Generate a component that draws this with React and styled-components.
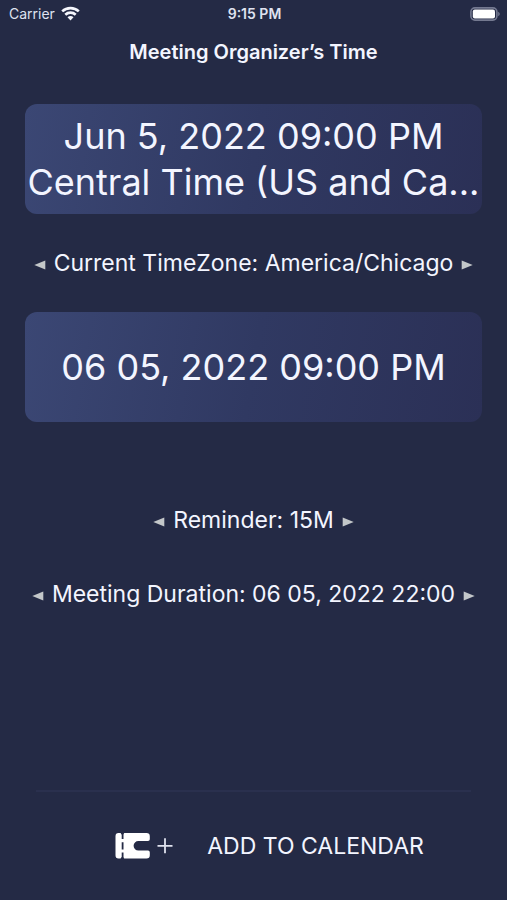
import { useState } from 'react';
import styled, { createGlobalStyle } from 'styled-components';

const GlobalStyle = createGlobalStyle`
    * {
        box-sizing: border-box;
    }

    body {
        margin: 0;
        background-color: #242a45;
        color: #f3f5ff;
        font-family: Inter, "Liberation Sans", sans-serif;
    }

    button {
        border: 0;
        padding: 0;
        background: none;
        color: inherit;
        font-family: inherit;
        cursor: pointer;
    }
`;

const Screen = styled.div`
    display: flex;
    flex-direction: column;
    min-height: 100vh;
`;

const StatusBar = styled.div`
    display: grid;
    grid-template-columns: 1fr auto 1fr;
    align-items: center;
    height: 27px;
    padding: 0 7px 0 9px;
    font-size: 14px;
    color: #dfe2f0;
`;

const Carrier = styled.div`
    display: flex;
    align-items: center;
    gap: 6px;
`;

const Clock = styled.time`
    font-weight: 600;
`;

const Battery = styled.div`
    display: flex;
    justify-content: flex-end;
`;

const Header = styled.header`
    display: flex;
    align-items: center;
    justify-content: center;
    height: 50px;
`;

const Title = styled.h1`
    margin: 0;
    font-size: 20px;
    font-weight: 600;
`;

const Main = styled.main`
    flex: 1;
    display: flex;
    flex-direction: column;
    padding: 27px 25px 0;
`;

const TimeCard = styled.button`
    display: flex;
    flex-direction: column;
    align-items: center;
    justify-content: center;
    width: 100%;
    height: 110px;
    border-radius: 12px;
    background-image: linear-gradient(100deg, #3b4774, #303962 50%, #2b3056);
    font-size: 36px;
    line-height: 46px;
    white-space: nowrap;
`;

const Options = styled.div`
    display: flex;
    flex-direction: column;
    gap: 42px;
    padding: 82px 0 0;
`;

const SelectorRow = styled.div`
    display: flex;
    align-items: center;
    justify-content: center;
    gap: 8px;
    height: ${props => props.$tall ? '98px' : '32px'};
    font-size: 23px;
    line-height: 32px;
    white-space: nowrap;
`;

const ArrowButton = styled.button`
    display: flex;
    padding: 4px 0 0;
`;

const Footer = styled.footer`
    margin: 0 36px;
    border-top: 2px solid #2a304e;
`;

const AddButton = styled.button`
    display: flex;
    align-items: center;
    justify-content: center;
    width: 100%;
    height: 108px;
    gap: 34px;
    padding: 0 0 0 32px;
    font-size: 23px;
`;

const ZONES = ['America/Chicago', 'America/New_York', 'America/Denver'];
const REMINDERS = ['15M', '30M', '1H'];
const DURATIONS = ['06 05, 2022 22:00', '06 05, 2022 22:30', '06 05, 2022 23:00'];

function WifiIcon () {
    return (
        <svg width="19" height="15" viewBox="0 0 19 15" fill="none" stroke="#f6f7fd" strokeWidth="2.6">
            <path d="M1.2 5.4C5.8 1 13.2 1 17.8 5.4" />
            <path d="M4.3 8.7C7.2 5.9 11.8 5.9 14.7 8.7" />
            <path d="M9.5 14.4L6.5 11.3C8.2 9.7 10.8 9.7 12.5 11.3Z" fill="#f6f7fd" stroke="none" />
        </svg>
    )
}

function BatteryIcon () {
    return (
        <svg width="30" height="14" viewBox="0 0 30 14">
            <rect x="0.9" y="0.9" width="26" height="12.2" rx="4" fill="none" stroke="#747990" strokeWidth="1.6" />
            <rect x="2.8" y="2.6" width="22.2" height="8.8" rx="2" fill="#fff" />
            <path d="M28.2 4.8C30.2 5.6 30.2 8.4 28.2 9.2Z" fill="#747990" />
        </svg>
    )
}

function ArrowIcon ({ direction }) {
    return (
        <svg width="12" height="10" viewBox="0 0 12 10" fill="#c3c7c9">
            <path d={direction === 'left' ? 'M0.3 5L11.3 0.4V9.6Z' : 'M11.7 5L0.7 0.4V9.6Z'} />
        </svg>
    )
}

function TicketPlusIcon () {
    return (
        <svg width="58" height="28" viewBox="0 0 58 28">
            <path d="M3.5 1H5.4C6 1 6.3 2.8 7.4 2.8S8.8 1 9.4 1H31.5Q34.8 1 34.8 4.3V7.2Q34.8 9 33 9H23.4A4.8 4.8 0 0 0 23.4 18.6H33Q34.8 18.6 34.8 20.4V23.3Q34.8 26.6 31.5 26.6H9.4C8.8 26.6 8.5 24.8 7.4 24.8S6 26.6 5.4 26.6H3.5Q0.5 26.6 0.5 23.3V4.3Q0.5 1 3.5 1Z" fill="#fff" />
            <path d="M7.6 1V7M7.6 10.2V17.4M7.6 20.6V26.6" stroke="#242a45" strokeWidth="1.8" />
            <path d="M42.5 13.8H57.5M50 6.3V21.3" stroke="#dfe2ee" strokeWidth="1.8" />
        </svg>
    )
}

function Selector ({ label, options, tall }) {
    const [index, setIndex] = useState(0)

    const move = (step) => {
        setIndex(prev => (prev + step + options.length) % options.length)
    }

    return (
        <SelectorRow $tall={tall}>
            <ArrowButton type="button" aria-label={`Previous ${label}`} onClick={() => move(-1)}>
                <ArrowIcon direction="left" />
            </ArrowButton>
            <span>{`${label}: ${options[index]}`}</span>
            <ArrowButton type="button" aria-label={`Next ${label}`} onClick={() => move(1)}>
                <ArrowIcon direction="right" />
            </ArrowButton>
        </SelectorRow>
    )
}

function App () {
    return (
        <Screen>
            <GlobalStyle />
            <StatusBar>
                <Carrier>
                    <span>Carrier</span>
                    <WifiIcon />
                </Carrier>
                <Clock>9:15 PM</Clock>
                <Battery>
                    <BatteryIcon />
                </Battery>
            </StatusBar>
            <Header>
                <Title>Meeting Organizer’s Time</Title>
            </Header>
            <Main>
                <TimeCard type="button">
                    <span>Jun 5, 2022 09:00 PM</span>
                    <span>Central Time (US and Ca...</span>
                </TimeCard>
                <Selector label="Current TimeZone" options={ZONES} tall />
                <TimeCard type="button">
                    <span>06 05, 2022 09:00 PM</span>
                </TimeCard>
                <Options>
                    <Selector label="Reminder" options={REMINDERS} />
                    <Selector label="Meeting Duration" options={DURATIONS} />
                </Options>
            </Main>
            <Footer>
                <AddButton type="button">
                    <TicketPlusIcon />
                    <span>ADD TO CALENDAR</span>
                </AddButton>
            </Footer>
        </Screen>
    )
}

export default App;
